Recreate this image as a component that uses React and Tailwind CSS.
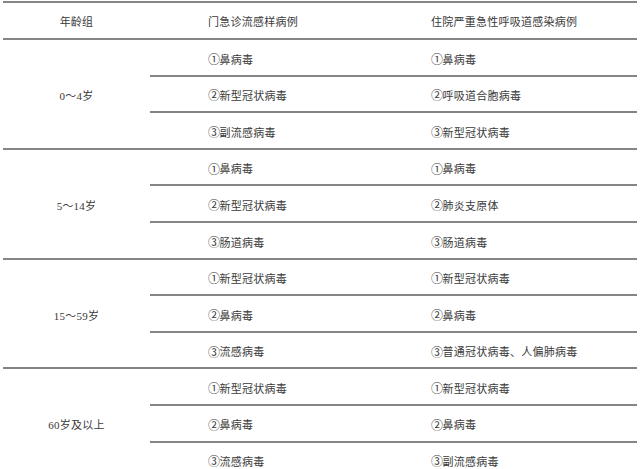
import React from 'react';

const groups = [
  {
    age: '0～4岁',
    rows: [
      ['①鼻病毒', '①鼻病毒'],
      ['②新型冠状病毒', '②呼吸道合胞病毒'],
      ['③副流感病毒', '③新型冠状病毒'],
    ],
  },
  {
    age: '5～14岁',
    rows: [
      ['①鼻病毒', '①鼻病毒'],
      ['②新型冠状病毒', '②肺炎支原体'],
      ['③肠道病毒', '③肠道病毒'],
    ],
  },
  {
    age: '15～59岁',
    rows: [
      ['①新型冠状病毒', '①新型冠状病毒'],
      ['②鼻病毒', '②鼻病毒'],
      ['③流感病毒', '③普通冠状病毒、人偏肺病毒'],
    ],
  },
  {
    age: '60岁及以上',
    rows: [
      ['①新型冠状病毒', '①新型冠状病毒'],
      ['②鼻病毒', '②鼻病毒'],
      ['③流感病毒', '③副流感病毒'],
    ],
  },
];

const cjk = { fontFamily: '"Noto Sans CJK SC", sans-serif' };

// circled number gets a full-width slot like the source table
const Item = ({ text }) => (
  <>
    <span className="inline-block w-[11.5px] text-[12px] text-center">{text[0]}</span>
    <span>{text.slice(1)}</span>
  </>
);

const App = () => {
  return (
    <div
      className="w-[640px] h-[469px] overflow-hidden bg-white px-[3px] pt-[1px] text-[11px] tracking-[0.25px] text-[#3a3a3a]"
      style={{ fontFamily: '"Liberation Serif", "Noto Sans CJK SC", serif' }}
    >
      {/* Header */}
      <div className="flex h-[39px] border-y-2 border-[#858585]">
        <div className="w-[147px] flex items-center justify-center pt-[3px]">年龄组</div>
        <div className="w-[223px] flex items-center pl-[58px] pt-[3px]">门急诊流感样病例</div>
        <div className="flex-1 flex items-center pl-[58px] pt-[3px]">住院严重急性呼吸道感染病例</div>
      </div>

      {groups.map((g) => (
        <div key={g.age} className="flex border-b-2 border-[#858585]">
          <div className="w-[147px] flex items-center justify-center pt-[5px]">{g.age}</div>
          <div className="flex-1 flex flex-col" style={cjk}>
            {g.rows.map((r, i) => (
              <div
                key={i}
                className={
                  i < 2
                    ? 'flex h-[36.6px] border-b-2 border-[#858585]'
                    : 'flex h-[34.6px]'
                }
              >
                <div className="w-[223px] flex items-center pl-[58px] pt-[3px]"><Item text={r[0]} /></div>
                <div className="flex-1 flex items-center pl-[58px] pt-[3px]"><Item text={r[1]} /></div>
              </div>
            ))}
          </div>
        </div>
      ))}
    </div>
  );
};

export default App;
